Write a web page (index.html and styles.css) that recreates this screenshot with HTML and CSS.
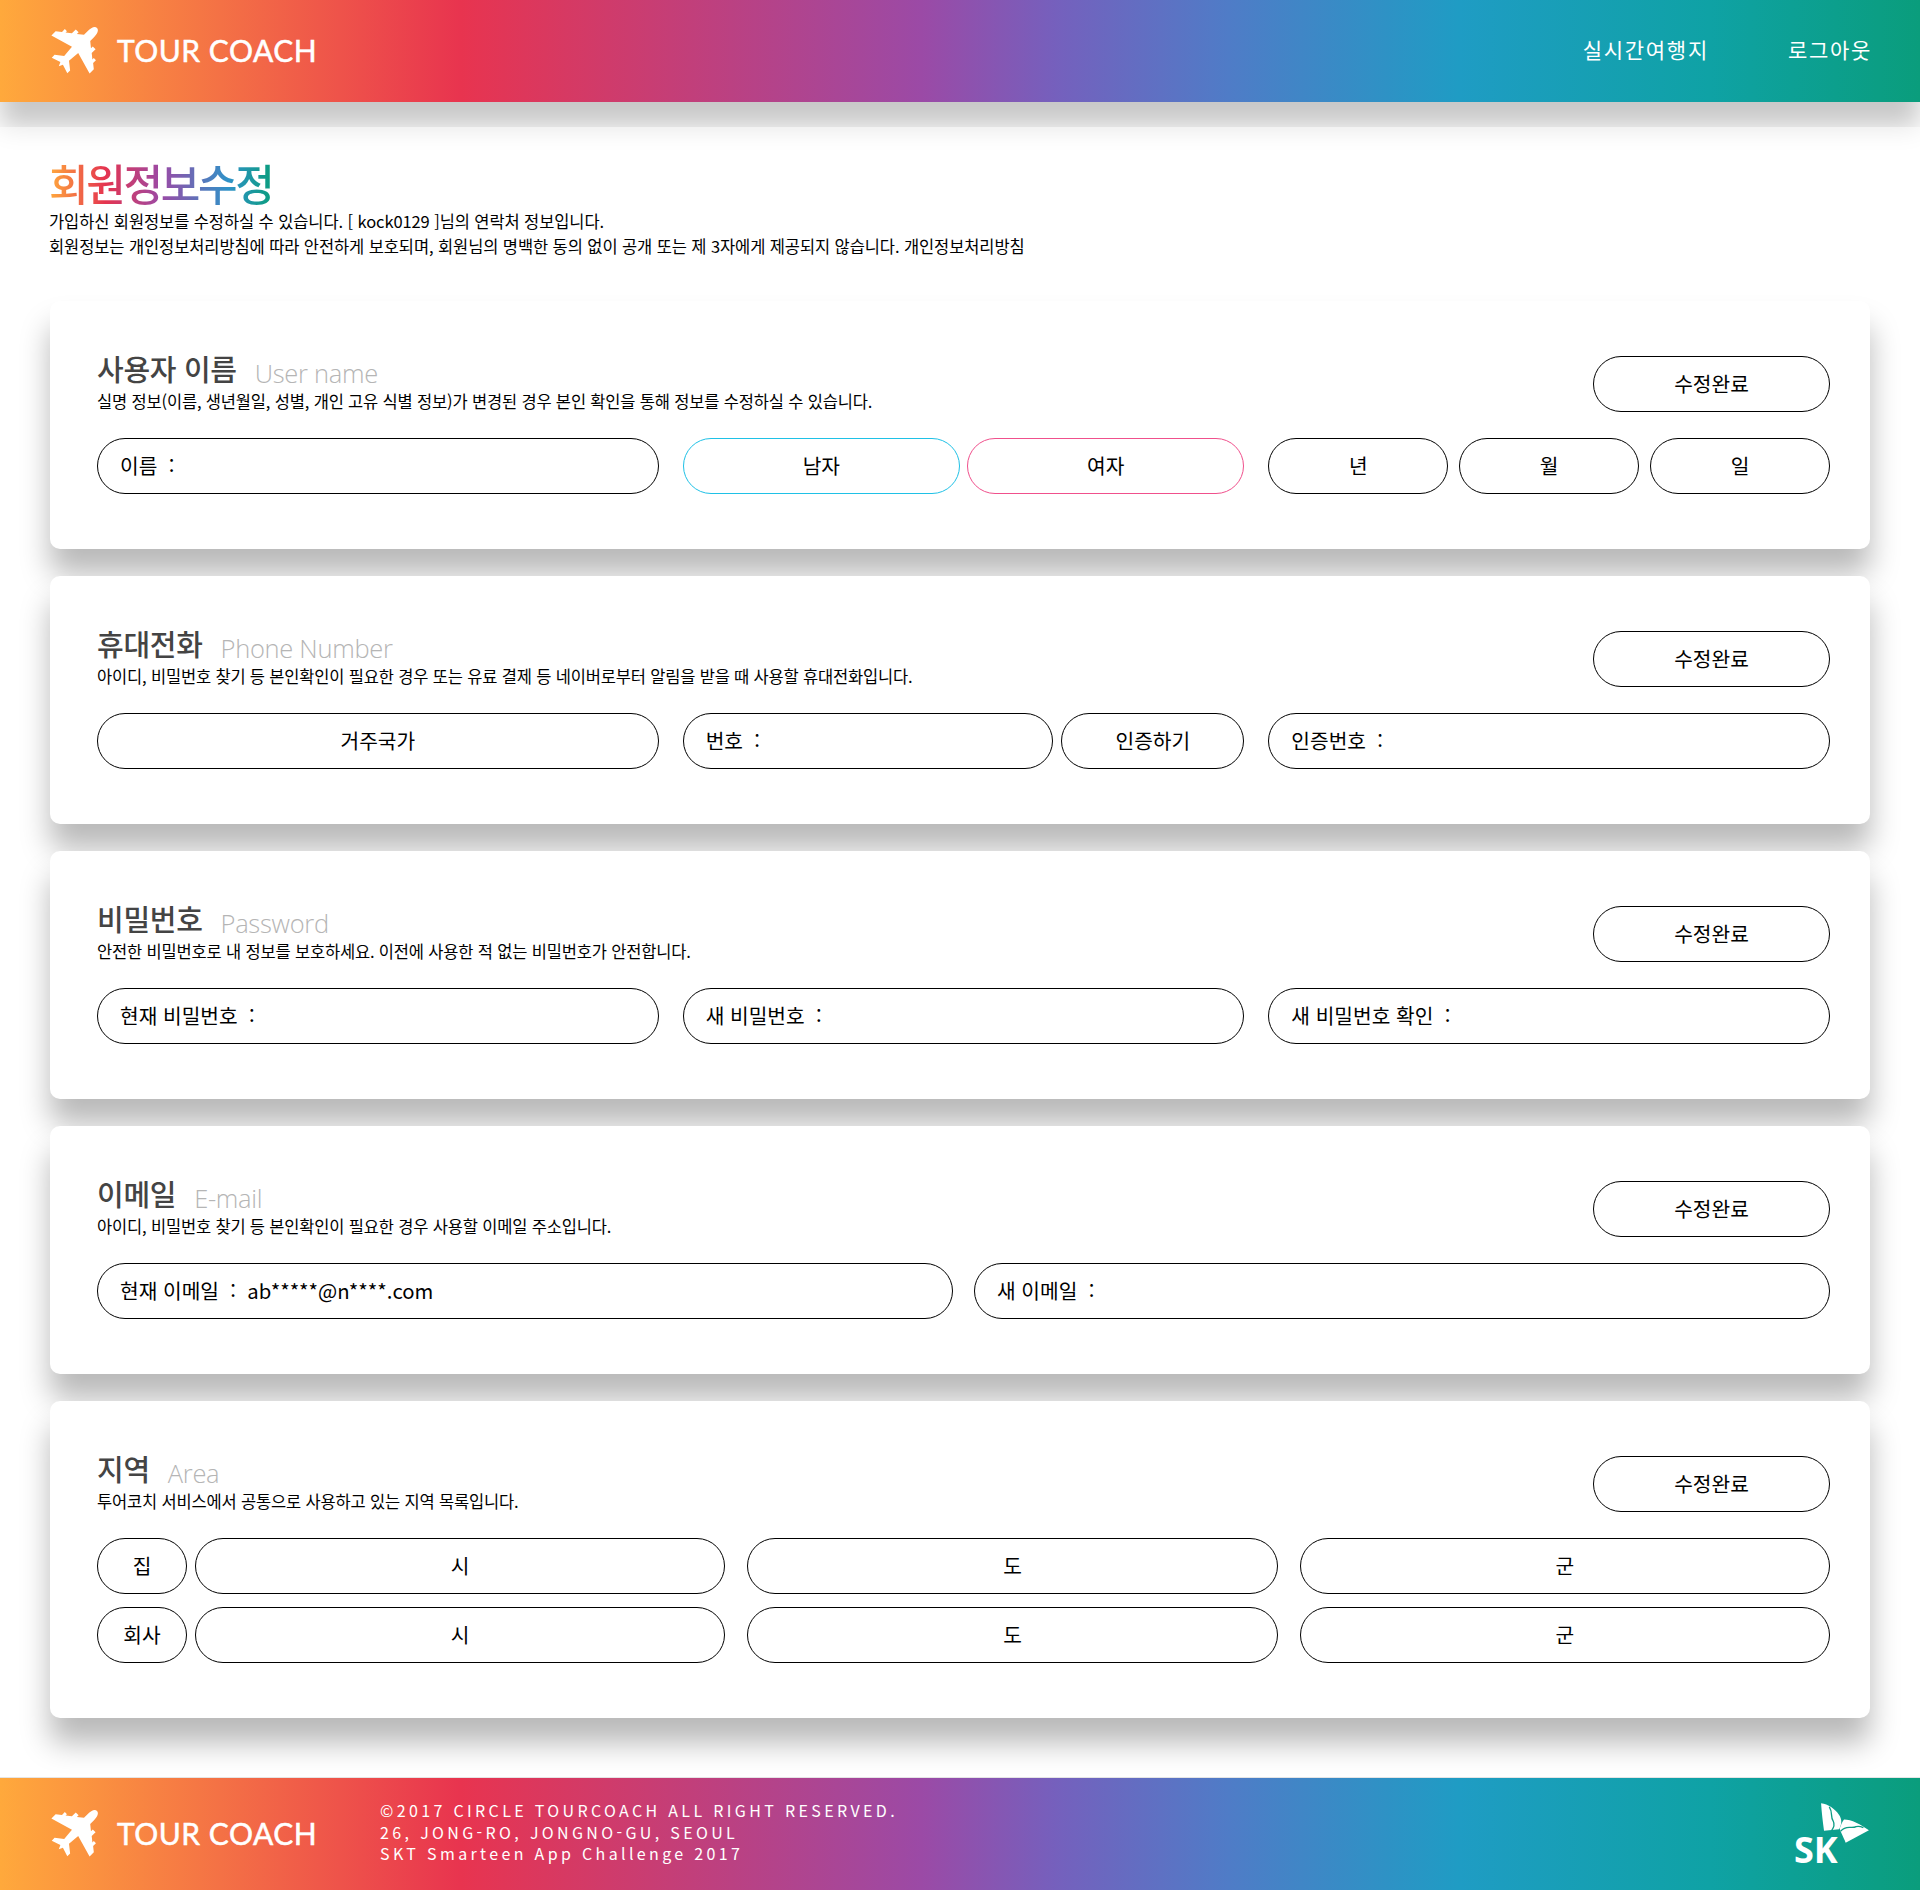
FILE: index.html
```html
<!DOCTYPE html>
<html lang="ko">
<head>
  <meta charset="utf-8">
  <title>Tour Coach - 회원정보수정</title>
  <link rel="stylesheet" href="styles.css">
</head>
<body>
  <header class="top-bar">
    <a class="logo">
      <svg class="plane" viewBox="0 0 48 48"><g transform="translate(46 1) rotate(45)"><path d="M0 0C3 0 4.4 4 4.4 9L4.4 14L10 18.5L10 16L14 16L14 21.5L19 25.5L19 23.5L22 23.5L22 27.5L27 31.5L27 37.5L4.4 31L3.4 43L11 49L11 53L1.8 50L0 54L-1.8 50L-11 53L-11 49L-3.4 43L-4.4 31L-27 37.5L-27 31.5L-22 27.5L-22 23.5L-19 23.5L-19 25.5L-14 21.5L-14 16L-10 16L-10 18.5L-4.4 14L-4.4 9C-4.4 4 -3 0 0 0Z"/></g></svg>
      <span class="logo-text">TOUR COACH</span>
    </a>
    <nav class="top-nav">
      <a>실시간여행지</a>
      <a>로그아웃</a>
    </nav>
  </header>

  <main>
    <section class="page-title">
      <h1>회원정보수정</h1>
      <p>가입하신 회원정보를 수정하실 수 있습니다. [ kock0129 ]님의 연락처 정보입니다.</p>
      <p>회원정보는 개인정보처리방침에 따라 안전하게 보호되며, 회원님의 명백한 동의 없이 공개 또는 제 3자에게 제공되지 않습니다. 개인정보처리방침</p>
    </section>

    <section class="card">
      <div class="card-head">
        <div>
          <h2>사용자 이름<span>User name</span></h2>
          <p>실명 정보(이름, 생년월일, 성별, 개인 고유 식별 정보)가 변경된 경우 본인 확인을 통해 정보를 수정하실 수 있습니다.</p>
        </div>
        <button class="pill done">수정완료</button>
      </div>
      <div class="row thirds">
        <div class="pill field">이름  :</div>
        <div class="group gender">
          <button class="pill male">남자</button>
          <button class="pill female">여자</button>
        </div>
        <div class="group birth">
          <button class="pill">년</button>
          <button class="pill">월</button>
          <button class="pill">일</button>
        </div>
      </div>
    </section>

    <section class="card">
      <div class="card-head">
        <div>
          <h2>휴대전화<span>Phone Number</span></h2>
          <p>아이디, 비밀번호 찾기 등 본인확인이 필요한 경우 또는 유료 결제 등 네이버로부터 알림을 받을 때 사용할 휴대전화입니다.</p>
        </div>
        <button class="pill done">수정완료</button>
      </div>
      <div class="row thirds">
        <button class="pill">거주국가</button>
        <div class="group phone">
          <div class="pill field">번호  :</div>
          <button class="pill">인증하기</button>
        </div>
        <div class="pill field">인증번호  :</div>
      </div>
    </section>

    <section class="card">
      <div class="card-head">
        <div>
          <h2>비밀번호<span>Password</span></h2>
          <p>안전한 비밀번호로 내 정보를 보호하세요. 이전에 사용한 적 없는 비밀번호가 안전합니다.</p>
        </div>
        <button class="pill done">수정완료</button>
      </div>
      <div class="row thirds">
        <div class="pill field">현재 비밀번호  :</div>
        <div class="pill field">새 비밀번호  :</div>
        <div class="pill field">새 비밀번호 확인  :</div>
      </div>
    </section>

    <section class="card">
      <div class="card-head">
        <div>
          <h2>이메일<span>E-mail</span></h2>
          <p>아이디, 비밀번호 찾기 등 본인확인이 필요한 경우 사용할 이메일 주소입니다.</p>
        </div>
        <button class="pill done">수정완료</button>
      </div>
      <div class="row halves">
        <div class="pill field">현재 이메일  :  ab*****@n****.com</div>
        <div class="pill field">새 이메일  :</div>
      </div>
    </section>

    <section class="card">
      <div class="card-head">
        <div>
          <h2>지역<span>Area</span></h2>
          <p>투어코치 서비스에서 공통으로 사용하고 있는 지역 목록입니다.</p>
        </div>
        <button class="pill done">수정완료</button>
      </div>
      <div class="row area">
        <button class="pill">집</button>
        <button class="pill">시</button>
        <button class="pill">도</button>
        <button class="pill">군</button>
      </div>
      <div class="row area">
        <button class="pill">회사</button>
        <button class="pill">시</button>
        <button class="pill">도</button>
        <button class="pill">군</button>
      </div>
    </section>
  </main>

  <footer class="bottom-bar">
    <a class="logo">
      <svg class="plane" viewBox="0 0 48 48"><g transform="translate(46 1) rotate(45)"><path d="M0 0C3 0 4.4 4 4.4 9L4.4 14L10 18.5L10 16L14 16L14 21.5L19 25.5L19 23.5L22 23.5L22 27.5L27 31.5L27 37.5L4.4 31L3.4 43L11 49L11 53L1.8 50L0 54L-1.8 50L-11 53L-11 49L-3.4 43L-4.4 31L-27 37.5L-27 31.5L-22 27.5L-22 23.5L-19 23.5L-19 25.5L-14 21.5L-14 16L-10 16L-10 18.5L-4.4 14L-4.4 9C-4.4 4 -3 0 0 0Z"/></g></svg>
      <span class="logo-text">TOUR COACH</span>
    </a>
    <div class="copyright">
      <div>©2017 CIRCLE TOURCOACH ALL RIGHT RESERVED.</div>
      <div>26, JONG-RO, JONGNO-GU, SEOUL</div>
      <div>SKT Smarteen App Challenge 2017</div>
    </div>
    <div class="sk-logo">
      <svg class="sk-wing" viewBox="243 100 146 122">
        <path d="M243 101C265 104 285 118 297 135C308 150 306 165 298 180L252 185C248 155 245 130 243 101Z"/>
        <path d="M313 150C335 150 365 165 389 183L318 221C312 205 302 188 300 178C304 165 308 157 313 150Z"/>
        <path class="sk-cut" d="M268 112C280 130 270 140 280 155C285 165 282 175 275 184"/>
        <path class="sk-cut" d="M303 186C320 165 335 180 350 172C358 170 365 172 372 175"/>
      </svg>
      <span class="sk-text">SK</span>
    </div>
  </footer>
</body>
</html>
```

FILE: styles.css
```css
* {
  box-sizing: border-box;
  margin: 0;
  padding: 0;
}
body {
  font-family: "Noto Sans CJK KR", "Noto Sans", sans-serif;
  color: #000;
  background-color: #fff;
}
.top-bar, .bottom-bar {
  display: flex;
  align-items: center;
  background-image: linear-gradient(90deg, #ffa93c 0%, #e8344f 24%, #9b4aa6 48%, #7560bd 55%, #4f7cc7 64%, #1f9cc4 76%, #0fa2a5 89%, #0a9d7c 100%);
  color: #fff;
}
.top-bar {
  justify-content: space-between;
  height: 102px;
  padding: 0 48px 0 51px;
  box-shadow: 0 25px 25px rgba(0, 0, 0, 0.22);
}
.logo {
  display: flex;
  align-items: center;
}
.plane {
  width: 48px;
  height: 48px;
  fill: #fff;
}
.logo-text {
  margin: 0 0 2px 18px;
  font-family: Lato, sans-serif;
  font-size: 30px;
  letter-spacing: 0.5px;
  -webkit-text-stroke: 0.5px #fff;
}
.top-nav {
  display: flex;
  gap: 79px;
  margin-top: -4px;
  font-size: 21px;
  letter-spacing: 1.7px;
}
main {
  position: relative;
  margin-top: 25px;
  padding: 29px 50px 60px;
  background-color: rgba(255, 255, 255, 0.5);
}
.page-title {
  margin: 0 0 42px -1px;
}
.page-title h1 {
  width: max-content;
  font-size: 43px;
  font-weight: 500;
  line-height: 53px;
  letter-spacing: -2.3px;
  background-image: linear-gradient(90deg, #ffa93c 0%, #e5344f 25%, #9b4aa6 50%, #2f92c8 80%, #0a9d7c 100%);
  -webkit-background-clip: text;
  background-clip: text;
  color: transparent;
}
.page-title p {
  font-size: 16.5px;
  line-height: 25px;
  letter-spacing: -0.1px;
}
.card {
  margin-bottom: 27.25px;
  padding: 55px 40px 55.25px 47px;
  background-color: #fff;
  border-radius: 10px;
  box-shadow: 0 25px 30px rgba(0, 0, 0, 0.28);
}
.card:last-child {
  margin-bottom: 0;
}
.card-head {
  display: flex;
  justify-content: space-between;
  height: 56px;
  margin-bottom: 25.5px;
}
.card-head h2 {
  height: 30px;
  margin-top: -3px;
  font-size: 29px;
  font-weight: 500;
  line-height: 30px;
  color: #444;
  letter-spacing: -0.3px;
}
.card-head h2 span {
  margin-left: 18px;
  font-family: "Open Sans", sans-serif;
  font-size: 25.5px;
  font-weight: 300;
  line-height: 1;
  vertical-align: -2px;
  color: #b5b5b5;
}
.card-head p {
  margin-top: 8px;
  font-size: 16.5px;
  line-height: 20px;
  letter-spacing: -0.17px;
}
.pill {
  height: 56px;
  width: 100%;
  padding-bottom: 2px;
  border: 1px solid #000;
  border-radius: 28px;
  background-color: #fff;
  font-family: inherit;
  font-size: 20.3px;
  color: #000;
  text-align: center;
}
.done {
  flex: none;
  width: 237px;
}
.field {
  display: flex;
  align-items: center;
  padding-left: 22px;
  white-space: pre;
}
.row {
  display: grid;
}
.thirds {
  grid-template-columns: repeat(3, 1fr);
  gap: 24px;
}
.halves {
  grid-template-columns: repeat(2, 1fr);
  gap: 21px;
}
.row.area {
  display: flex;
  gap: 22px;
}
.area + .area {
  margin-top: 13.5px;
}
.area .pill {
  flex: 1;
}
.area .pill:first-child {
  flex: 0 0 90px;
  margin-right: -14px;
}
.group {
  display: grid;
}
.gender {
  grid-template-columns: 1fr 1fr;
  gap: 7px;
}
.birth {
  grid-template-columns: repeat(3, 1fr);
  gap: 11px;
}
.phone {
  grid-template-columns: 1fr 183px;
  gap: 8px;
}
.male {
  border-color: #1fc1e6;
}
.female {
  border-color: #f0508c;
}
.bottom-bar {
  position: relative;
  height: 112px;
  padding: 0 51px;
  box-shadow: 0 -1px 0 rgba(0, 0, 0, 0.1);
}
.copyright {
  margin: 0 0 4px 63px;
  font-size: 16px;
  line-height: 21.5px;
  letter-spacing: 3.35px;
}
.sk-logo {
  display: flex;
  flex-direction: column;
  width: 75px;
  margin-left: auto;
}
.sk-wing {
  align-self: flex-end;
  width: 48px;
  height: 40px;
  fill: #fff;
}
.sk-cut {
  fill: none;
  stroke: #0d9c84;
  stroke-width: 4;
}
.sk-text {
  margin-top: -8px;
  font-family: "Open Sans", sans-serif;
  font-size: 36px;
  font-weight: 700;
  line-height: 30px;
}
```
